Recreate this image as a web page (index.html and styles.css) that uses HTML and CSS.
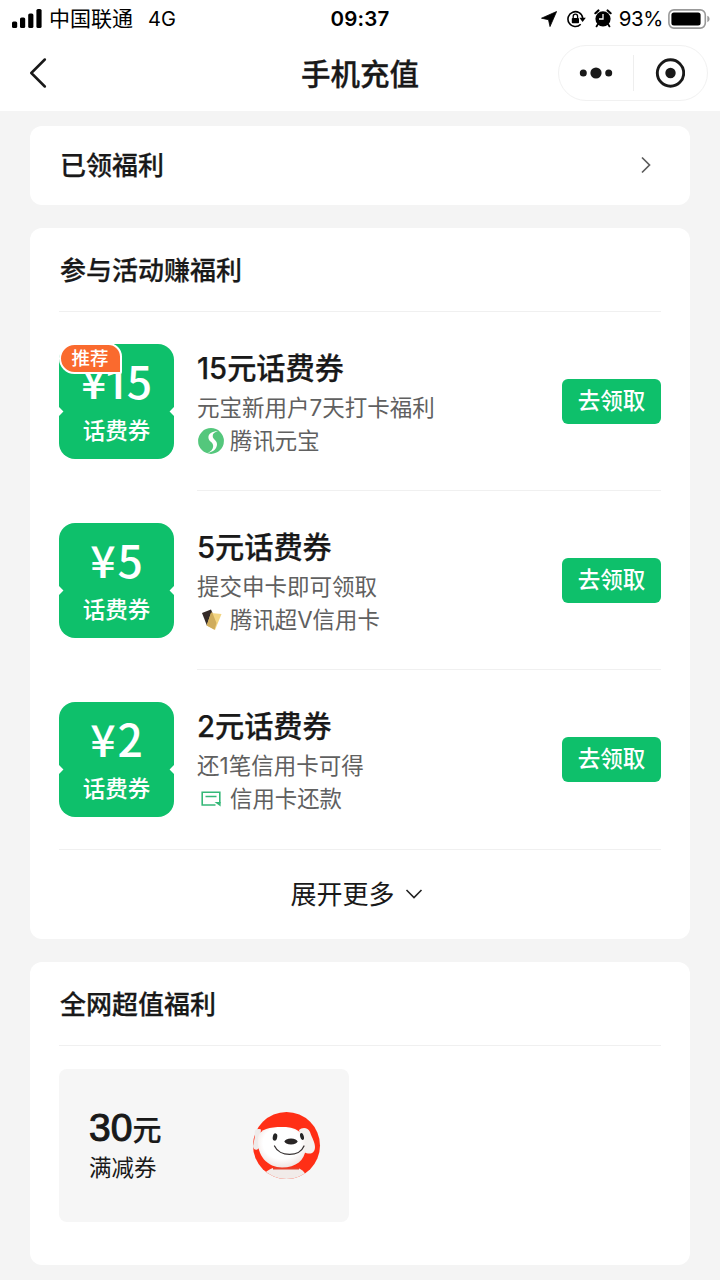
FILE: index.html
```html
<!DOCTYPE html>
<html lang="zh-CN">
<head>
<meta charset="utf-8">
<title>手机充值</title>
<link rel="stylesheet" href="styles.css">
</head>
<body>
<header class="top">
  <div class="status">
    <div class="status-left">
      <svg class="signal" width="30" height="20" viewBox="0 0 30 20"><rect x="0" y="12.500" width="5.200" height="6.500" rx="1.600"/><rect x="8" y="8.500" width="5.200" height="10.500" rx="1.600"/><rect x="16.200" y="4.500" width="5.200" height="14.500" rx="1.600"/><rect x="24.400" y="0" width="5.200" height="19" rx="1.600"/></svg>
      <span class="carrier">中国联通</span><span class="network">4G</span>
    </div>
    <span class="clock">09:37</span>
    <div class="status-right">
      <svg width="16" height="16" viewBox="0 0 16 16"><path d="M15.600.5 9 15.600 7.500 8.700.5 7.200z" stroke="#000" stroke-width=".8" stroke-linejoin="round"/></svg>
      <svg class="lock" width="19" height="18" viewBox="0 0 19 18"><path d="M13.700 14.200A7.400 7.400 0 1 1 15.700 8" fill="none" stroke="#000" stroke-width="1.600"/><path d="M12.400 7.700h6.400l-3.200 4.200z"/><rect x="4.800" y="8" width="7.200" height="5.200" rx=".8"/><path d="M6.200 8V6.400a2.200 2.200 0 0 1 4.400 0V8" fill="none" stroke="#000" stroke-width="1.300"/></svg>
      <svg class="alarm" width="18" height="19" viewBox="0 0 18 19"><circle cx="9" cy="9.800" r="7.600"/><path d="M1.400 4.200 4.400 1.500M16.600 4.200 13.600 1.500" stroke="#000" stroke-width="2.200" stroke-linecap="round"/><path d="m4 15-1.500 2.400m11.500-2.400 1.500 2.400" stroke="#000" stroke-width="1.800" stroke-linecap="round"/><path d="M9 5v5H5" fill="none" stroke="#fff" stroke-width="1.300"/></svg>
      <span class="percent">93%</span>
      <svg class="battery" width="43" height="20" viewBox="0 0 43 20"><rect x=".9" y=".9" width="36.400" height="18.200" rx="5" fill="#fff" stroke="#999" stroke-width="1.600"/><rect x="3.400" y="3.400" width="29.200" height="13.200" rx="2.500"/><path d="M39.300 6.800c3 1.100 3 5.300 0 6.400z" fill="#999"/></svg>
    </div>
  </div>
  <div class="nav">
    <svg class="back" width="18" height="30" viewBox="0 0 18 30"><path d="M15.800 1.500 2.300 15l13.500 13.500" fill="none" stroke="#191919" stroke-width="2.500" stroke-linecap="round" stroke-linejoin="round"/></svg>
    <h1 class="page-title">手机充值</h1>
    <div class="capsule">
      <svg class="dots" width="34" height="12" viewBox="0 0 34 12"><circle cx="4.300" cy="6" r="3.500"/><circle cx="17" cy="6" r="5.600"/><circle cx="29.700" cy="6" r="3.500"/></svg>
      <span class="capsule-line"></span>
      <svg class="target" width="30" height="30" viewBox="0 0 30 30"><circle cx="15.500" cy="15" r="13.200" fill="none" stroke="#191919" stroke-width="2.900"/><circle cx="15.500" cy="15" r="5.200"/></svg>
    </div>
  </div>
</header>
<main class="content">
  <section class="card claimed">
    <h2 class="heading">已领福利</h2>
    <svg class="chevron" width="12" height="18" viewBox="0 0 12 18"><path d="m2 1.500 7.500 7.500L2 16.500" fill="none" stroke="#5c5c5c" stroke-width="1.700"/></svg>
  </section>
  <section class="card tasks">
    <h2 class="heading card-head">参与活动赚福利</h2>
    <article class="task">
      <div class="coupon"><span class="tag">推荐</span><span class="amount"><i class="yen">¥</i><span><span class="one">1</span>5</span></span><span class="kind">话费券</span></div>
      <div class="task-body">
        <div class="info">
          <h3 class="name">15元话费券</h3>
          <p class="desc">元宝新用户7天打卡福利</p>
          <p class="source"><svg class="logo" width="28" height="28" viewBox="0 0 28 28"><circle cx="14" cy="14" r="12.900" fill="#54c77c"/><path d="M21 4.200c-5.600-.2-9.600 2.300-9.600 6 0 4.400 4.800 4.700 4.800 8.800 0 3.300-2.400 5.500-5.700 7 5.800-.8 9.500-4.300 9.500-8.700 0-4.600-4.300-4.600-4.300-8.400 0-2.300 1.800-4 5.300-4.700z" fill="#fff"/></svg><span>腾讯元宝</span></p>
        </div>
        <button class="claim">去领取</button>
      </div>
    </article>
    <article class="task">
      <div class="coupon"><span class="amount"><i class="yen">¥</i>5</span><span class="kind">话费券</span></div>
      <div class="task-body">
        <div class="info">
          <h3 class="name">5元话费券</h3>
          <p class="desc">提交申卡即可领取</p>
          <p class="source"><svg class="logo" width="28" height="28" viewBox="0 0 28 28"><path d="m5 7 9-3.500L19.500 17 10 19.800z" fill="#332a27"/><path d="m14 6.900 10.500 1.200L18 24l-8.300-4.400z" fill="#f3d583"/><path d="M14 6.900 15 6l4.500 11-2 6.700-7.800-4.100z" fill="#cfac5c"/></svg><span>腾讯超V信用卡</span></p>
        </div>
        <button class="claim">去领取</button>
      </div>
    </article>
    <article class="task">
      <div class="coupon"><span class="amount"><i class="yen">¥</i>2</span><span class="kind">话费券</span></div>
      <div class="task-body last">
        <div class="info">
          <h3 class="name">2元话费券</h3>
          <p class="desc">还1笔信用卡可得</p>
          <p class="source"><svg class="logo" width="28" height="28" viewBox="0 0 28 28"><path d="M18.500 20H5.200V7.200h17.600v11M8.500 11.500h11" fill="none" stroke="#35b878" stroke-width="1.600"/><path d="M17.500 17h6.100v4.500z" fill="#35b878"/></svg><span>信用卡还款</span></p>
        </div>
        <button class="claim">去领取</button>
      </div>
    </article>
    <div class="more"><span>展开更多</span><svg class="down" width="18" height="12" viewBox="0 0 18 12"><path d="m1.500 2 7.500 7.500L16.500 2" fill="none" stroke="#222" stroke-width="1.600"/></svg></div>
  </section>
  <section class="card deals">
    <h2 class="heading card-head">全网超值福利</h2>
    <div class="deal">
      <div class="deal-text"><strong class="deal-value">30<small class="unit">元</small></strong><span class="deal-kind">满减券</span></div>
      <svg class="dog" width="70" height="70" viewBox="0 0 70 70">
        <defs>
          <clipPath id="disc"><circle cx="35.500" cy="35.500" r="33.500"/></clipPath>
          <radialGradient id="fur" cx=".5" cy=".4" r=".65"><stop offset=".6" stop-color="#fff"/><stop offset="1" stop-color="#ecdfdc"/></radialGradient>
        </defs>
        <circle cx="35.500" cy="35.500" r="33.500" fill="#ff2f16"/>
        <g clip-path="url(#disc)"><path d="M10 70c3-7 6-10 12-12h25c5 2 9 6 9 12z" fill="#f1ebe9"/><path d="M22 58.500h26" stroke="#e8402a" stroke-width="2"/></g>
        <path d="M10 19.500C4 18 3 21 4 26L2 36c0 4 4 5 6 2z" fill="#eeebea"/>
        <path d="M48 20c3-3 9-3 11 2 2 6 5 10 5 15 0 7-6 8-11 5z" fill="#f4f1ef"/>
        <path d="M7 27C9 18 22 16.500 35 17c14 1 20 9 19.500 22C54 50 45 57.500 31 57.500S5 46 7 27z" fill="url(#fur)"/>
        <ellipse cx="24" cy="27" rx="2.200" ry="3.700" transform="rotate(12 24 27)" fill="#252525"/><ellipse cx="51" cy="26.500" rx="1.800" ry="3.500" transform="rotate(-15 51 26.500)" fill="#252525"/>
        <ellipse cx="40" cy="31.500" rx="6.500" ry="2.900" fill="#292525"/>
        <path d="M23.500 36c5 11 25 11.500 29.500 0" fill="none" stroke="#383333" stroke-width="1.300" stroke-linecap="round"/>
      </svg>
    </div>
  </section>
</main>
</body>
</html>
```
FILE: styles.css
```css
* { box-sizing: border-box; margin: 0; padding: 0; }
body { width: 720px; height: 1280px; overflow: hidden; background: #f4f4f4; color: #191919; font-family: Inter, "Noto Sans CJK SC", sans-serif; }
svg { display: block; flex: none; }
.top { height: 111px; background: #fff; }
.status { height: 36px; display: grid; grid-template-columns: 1fr auto 1fr; align-items: center; padding: 0 9px 0 12px; color: #000; }
.status-left, .status-right { display: flex; align-items: center; }
.status-right { justify-content: flex-end; }
.signal { margin-right: 7px; }
.carrier { font-size: 21px; line-height: 36px; padding-top: 1px; }
.network { font-size: 20px; margin-left: 15px; padding-top: 1px; }
.clock { font-size: 20.500px; font-weight: 600; letter-spacing: .2px; margin-right: 3px; }
.lock { margin-left: 10px; }
.alarm { margin: 0 7px 0 8px; }
.percent { font-size: 20.500px; letter-spacing: -.4px; margin-right: 5px; }
.nav { height: 75px; display: grid; grid-template-columns: 255px 153px 1fr; align-items: center; padding: 0 12px 2px 29px; }
.page-title { font-size: 29.500px; line-height: 44px; font-weight: 500; -webkit-text-stroke: .3px currentColor; margin-left: 17px; padding-top: 3px; }
.capsule { justify-self: end; width: 150px; height: 56px; border: 1px solid #f1f1f1; border-radius: 28px; display: flex; align-items: center; padding-left: 20px; }
.dots, .target { fill: #191919; }
.capsule-line { width: 1px; height: 36px; background: #eee; margin: 0 21px 0 20px; }
.content { padding: 15px 30px 0; display: flex; flex-direction: column; gap: 23px; }
.card { background: #fff; border-radius: 12px; padding: 0 29px; }
.claimed { height: 79px; display: flex; align-items: center; justify-content: space-between; padding-right: 38px; }
.chevron { margin-bottom: 1px; }
.heading { font-size: 26px; font-weight: 500; line-height: 40px; padding-left: 1px; -webkit-text-stroke: .25px currentColor; }
.tasks { height: 711px; }
.card-head { height: 84px; line-height: 85px; border-bottom: 1px solid #f0f0f0; }
.task { height: 179px; display: flex; gap: 23px; }
.coupon { position: relative; flex: none; width: 115px; height: 115px; margin-top: 32px; border-radius: 16px; background: #0ec06b; color: #fff; text-align: center; }
.coupon::before, .coupon::after { content: ""; position: absolute; top: 64px; width: 7px; height: 7px; background: #fff; transform: rotate(45deg); }
.coupon::before { left: -4px; }
.coupon::after { right: -4px; }
.amount { display: flex; justify-content: center; height: 71px; font-size: 44.500px; line-height: 71px; font-weight: 500; font-family: "Noto Sans CJK SC", sans-serif; }
.one { font-family: Roboto, sans-serif; letter-spacing: -3px; margin-left: -4px; }
.yen { font-style: normal; margin-right: 2px; }
.kind { display: block; font-size: 22.500px; line-height: 32px; font-weight: 500; }
.tag { position: absolute; z-index: 1; top: -1px; left: 0; width: 63px; height: 31px; border: 2px solid #fff; border-radius: 16px 14px 2px 16px; background: #fa6a2e; font-size: 18.500px; line-height: 26px; font-weight: 500; padding-right: 1px; }
.task-body { flex: 1; display: flex; justify-content: space-between; border-bottom: 1px solid #f0f0f0; }
.last { border-color: transparent; }
.info { padding-top: 35px; }
.name { font-size: 29.200px; line-height: 44px; font-weight: 500; -webkit-text-stroke: .25px currentColor; }
.desc { font-size: 22.500px; line-height: 34px; color: #606060; font-weight: 400; }
.source { display: flex; align-items: center; height: 31px; font-size: 22.400px; line-height: 31px; color: #606060; gap: 5px; }
.claim { width: 99px; height: 45px; margin-top: 67px; border: 0; border-radius: 6px; background: #0ec06b; color: #fff; font-family: inherit; font-size: 22.500px; line-height: 43px; font-weight: 500; padding-bottom: 2px; }
.more { height: 90px; border-top: 1px solid #f0f0f0; display: flex; align-items: center; justify-content: center; gap: 10px; font-size: 26px; padding: 0 7px 4px 0; }
.down { margin-top: 3px; }
.deals { height: 303px; }
.deal { width: 290px; height: 153px; margin-top: 23px; padding: 0 28px 2px 30px; border-radius: 8px; background: #f6f6f6; display: flex; align-items: center; justify-content: space-between; }
.deal-text { display: flex; flex-direction: column; padding-top: 4px; }
.deal-value { font-family: "Liberation Sans", "Noto Sans CJK SC", sans-serif; font-size: 39px; line-height: 40px; font-weight: 400; -webkit-text-stroke: 1.100px currentColor; }
.unit { font-size: 29px; font-weight: 500; -webkit-text-stroke: .2px currentColor; }
.deal-kind { font-size: 22.500px; line-height: 34px; }
```
